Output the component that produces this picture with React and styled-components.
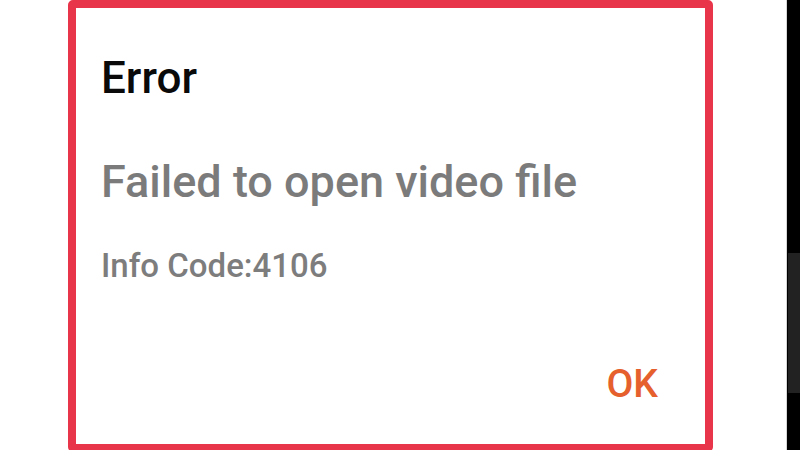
import styled, { createGlobalStyle } from 'styled-components'

const GlobalStyle = createGlobalStyle`
  html, body {
    margin: 0;
    padding: 0;
    background: #ffffff;
    overflow: hidden;
  }
  body {
    font-family: Roboto, "Noto Sans", sans-serif;
  }
`

const Screen = styled.div`
  width: 800px;
  height: 450px;
  display: flex;
  overflow: hidden;
  background: #ffffff;
`

const LeftGap = styled.div`
  width: 68px;
  flex-shrink: 0;
`

const Frame = styled.div`
  width: 645px;
  height: 452px;
  flex-shrink: 0;
  box-sizing: border-box;
  border: 8px solid #e8354a;
  border-radius: 5px;
  background: #ffffff;
  display: flex;
  flex-direction: column;
  padding: 48px 47px 0 25px;
`

const Title = styled.div`
  font-size: 44px;
  line-height: 1;
  font-weight: 500;
  color: #0a0a0a;
`

const Message = styled.div`
  margin-top: 59px;
  font-size: 45px;
  line-height: 1;
  font-weight: 500;
  color: #7b7b7b;
`

const Info = styled.div`
  margin-top: 45px;
  font-size: 33px;
  line-height: 1;
  font-weight: 500;
  color: #7d7d7d;
`

const Actions = styled.div`
  margin-top: 83px;
  display: flex;
  justify-content: flex-end;
`

const OkButton = styled.button`
  border: none;
  background: none;
  padding: 0;
  font-family: inherit;
  font-size: 39px;
  line-height: 1;
  font-weight: 500;
  color: #e5602c;
  cursor: pointer;
`

const RightGap = styled.div`
  flex: 1;
  border-right: 1px solid #d6d6d6;
`

const SideStrip = styled.div`
  width: 13px;
  flex-shrink: 0;
  background: #000000;
  display: flex;
  flex-direction: column;
  padding-top: 253px;
`

const SideBlock = styled.div`
  height: 140px;
  margin-left: 1px;
  background: #222222;
`

export default function App() {
  return (
    <>
      <GlobalStyle />
      <Screen>
        <LeftGap />
        <Frame>
          <Title>Error</Title>
          <Message>Failed to open video file</Message>
          <Info>Info Code:4106</Info>
          <Actions>
            <OkButton>OK</OkButton>
          </Actions>
        </Frame>
        <RightGap />
        <SideStrip>
          <SideBlock />
        </SideStrip>
      </Screen>
    </>
  )
}
